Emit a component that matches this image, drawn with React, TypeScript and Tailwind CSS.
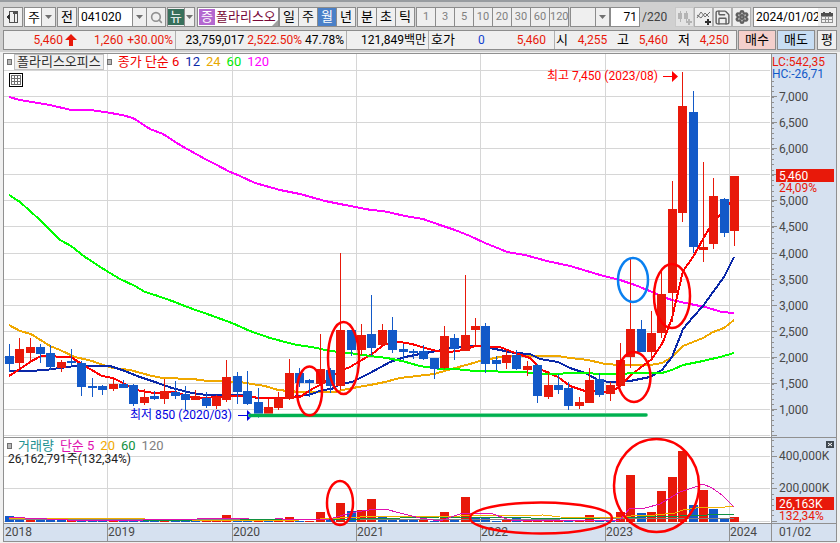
import React, { useState } from "react";
import { Search, Save, Settings } from "lucide-react";

// 1. 타입 정의
// [고가 y, 저가 y, 몸통 위, 몸통 아래, 양봉(1) / 음봉(0)]
type Candle = [number, number, number, number, number];
// [높이, 증가(1) / 감소(0)]
type Volume = [number, number];

const RED = "#e8190a";
const BLUE = "#1259c8";

// 2. 차트 데이터
const candles: Candle[] = [
  [344, 372, 356, 364, 0], [338, 368, 349, 363, 1], [338, 363, 347, 353, 1],
  [344, 363, 347, 354, 0], [345, 370, 353, 367, 0], [360, 372, 362, 368, 1],
  [349, 366, 361, 363, 0], [361, 396, 363, 387, 0], [378, 397, 386, 388, 0],
  [385, 395, 386, 390, 0], [379, 391, 384, 389, 1], [380, 388, 384, 388, 0],
  [384, 406, 385, 404, 0], [389, 405, 397, 403, 1], [391, 400, 396, 399, 0],
  [379, 404, 391, 399, 1], [381, 399, 392, 396, 0], [386, 410, 394, 400, 0],
  [390, 400, 396, 400, 1], [392, 408, 398, 406, 0], [395, 409, 397, 406, 1],
  [360, 402, 377, 400, 1], [372, 404, 376, 392, 0], [371, 405, 391, 404, 0],
  [388, 418, 402, 414, 0], [399, 415, 407, 414, 1], [392, 410, 398, 408, 1],
  [359, 400, 373, 399, 1], [368, 387, 373, 383, 0], [379, 397, 380, 383, 0],
  [334, 385, 369, 384, 1], [368, 393, 370, 386, 0], [253, 390, 330, 386, 1],
  [330, 356, 330, 350, 0], [324, 355, 335, 350, 1], [295, 356, 334, 348, 0],
  [324, 345, 330, 345, 1], [317, 353, 330, 350, 0], [344, 360, 349, 352, 0],
  [349, 359, 351, 353, 0], [345, 360, 351, 359, 0], [358, 379, 358, 369, 0],
  [326, 369, 336, 368, 1], [334, 360, 338, 349, 0], [275, 351, 335, 351, 1],
  [318, 346, 326, 330, 1], [323, 373, 326, 364, 0], [356, 370, 360, 364, 0],
  [350, 369, 355, 363, 1], [350, 370, 355, 369, 0], [361, 376, 366, 370, 1],
  [364, 403, 365, 396, 0], [371, 399, 385, 397, 1], [374, 394, 385, 390, 0],
  [382, 410, 388, 406, 0], [397, 409, 402, 406, 1], [368, 403, 380, 403, 1],
  [373, 397, 379, 395, 0], [382, 401, 385, 394, 1], [343, 387, 360, 386, 1],
  [259, 368, 329, 357, 1], [320, 352, 329, 352, 0], [311, 360, 333, 352, 1],
  [270, 338, 294, 333, 1], [181, 322, 209, 293, 1], [72, 222, 106, 213, 1],
  [91, 253, 112, 247, 0], [162, 262, 247, 250, 1], [178, 249, 196, 244, 1],
  [198, 237, 199, 233, 0], [176, 246, 176, 231, 1],
];

const volumes: Volume[] = [
  [6, 0], [2, 0], [2, 1], [2, 0], [2, 0], [2, 0], [2, 1], [1, 0], [1, 0], [1, 0],
  [1, 1], [1, 0], [1, 0], [1, 0], [1, 0], [1, 1], [1, 0], [1, 0], [1, 0], [1, 1],
  [2, 1], [7, 1], [1, 0], [1, 0], [2, 1], [1, 0], [1, 1], [5, 1], [1, 0], [1, 1],
  [10, 1], [2, 0], [19, 1], [11, 0], [12, 1], [23, 1], [5, 0], [4, 0], [3, 0], [3, 0],
  [2, 1], [1, 0], [10, 1], [2, 0], [25, 1], [5, 0], [4, 0], [1, 0], [2, 1], [4, 0],
  [1, 1], [1, 1], [1, 1], [1, 1], [2, 0], [2, 1], [7, 1], [2, 0], [2, 0], [10, 1],
  [47, 1], [9, 0], [10, 1], [31, 1], [45, 1], [71, 1], [17, 0], [32, 1], [13, 0],
  [4, 0], [5, 1],
];

const averages = [
  {
    color: "#ff00ff",
    points:
      "9,97 20,100 50,105 71,110 90,110 105,112 122,115 133,118 150,129 163,134 180,145 205,159 217,165 228,171 240,176 255,183 280,190 300,194 325,201 345,205 371,210 383,211 405,216 423,219 440,225 455,230 470,236 485,243 500,249 507,252 525,255 547,261 570,266 600,275 620,280 632,284 640,287 652,292 663,297 672,300 690,304 705,307 722,312 734,313",
  },
  {
    color: "#f0a800",
    points:
      "9,325 20,331 31,334 50,346 60,350 75,357 92,361 103,365 113,368 130,370 152,376 163,378 193,379 207,381 240,382 252,384 265,386 278,390 300,392 335,392 347,389 370,385 385,382 400,378 417,376 434,374 455,368 470,364 480,361 500,357 520,356 558,356 570,358 588,360 605,364 620,365 650,365 662,363 672,357 683,346 703,338 713,332 724,328 734,320",
  },
  {
    color: "#0a28a8",
    points:
      "9,371 30,371 45,370 60,368 75,366 110,366 125,371 137,376 155,382 172,388 192,393 207,395 240,395 258,398 280,398 300,396 312,394 322,390 332,389 340,384 352,382 370,373 390,362 405,357 420,354 437,351 450,348 470,346 480,346 500,350 515,353 530,354 540,359 558,362 570,368 585,373 600,381 612,382 630,381 650,377 662,370 672,357 683,329 693,317 703,306 713,292 724,277 734,257",
  },
  {
    color: "#ff0000",
    points:
      "9,376 20,369 30,362 41,356 52,356 60,357 71,357 80,363 90,369 102,376 113,378 125,384 140,391 155,393 175,392 190,397 205,398 230,396 250,396 258,398 280,398 300,397 312,389 322,384 340,371 350,367 360,361 372,354 385,344 400,342 412,344 425,348 437,351 450,352 463,350 475,346 500,347 515,353 530,358 542,370 558,377 570,386 585,391 605,392 618,388 630,376 640,368 652,359 663,342 672,318 683,271 693,257 703,239 713,222 724,211 730,203 734,203",
  },
  {
    color: "#00ff00",
    points:
      "9,195 20,202 40,220 60,240 71,246 85,257 105,270 120,279 135,286 145,292 155,295 172,301 190,308 210,315 232,323 250,331 270,338 285,342 297,345 312,347 330,351 350,353 370,356 387,358 402,361 420,366 440,369 455,369 475,371 520,372 547,374 580,373 605,374 650,373 662,373 672,370 683,365 703,361 720,357 734,353",
  },
];

const volumeAverages = [
  { color: "#808080", points: "9,519 180,520 350,519 560,519 734,518" },
  { color: "#109040", points: "107,520 240,520 360,519 440,517 502,517 560,519 680,516 734,514" },
  { color: "#f0b000", points: "9,518 97,518 240,521 300,520 360,517 460,516 543,515 560,517 620,518 636,515 655,515 675,513 683,510 703,507 725,507 734,506" },
  { color: "#e010b0", points: "9,517 25,518 90,521 250,518 275,518 290,520 330,519 350,513 375,509 385,509 400,513 420,518 440,521 460,514 490,513 510,520 570,521 620,520 630,508 645,508 660,504 680,492 695,487 703,484 712,488 722,495 734,507" },
];

const years = [
  { label: "2018", x: 4 },
  { label: "2019", x: 107 },
  { label: "2020", x: 232 },
  { label: "2021", x: 356 },
  { label: "2022", x: 480 },
  { label: "2023", x: 605 },
  { label: "2024", x: 729 },
];

const marks = [
  { cx: 309.5, cy: 391, rx: 12.5, ry: 24.5, color: "#ff0000" },
  { cx: 343.5, cy: 358, rx: 15.5, ry: 36, color: "#ff0000" },
  { cx: 633, cy: 280, rx: 15, ry: 22, color: "#0a80f0" },
  { cx: 672, cy: 296, rx: 18, ry: 32, color: "#ff0000" },
  { cx: 634, cy: 377, rx: 16.5, ry: 25, color: "#ff0000" },
  { cx: 340, cy: 503, rx: 13, ry: 22, color: "#ff0000" },
  { cx: 541, cy: 518, rx: 71, ry: 15.5, color: "#ff0000" },
  { cx: 656.5, cy: 485.5, rx: 42.5, ry: 46.5, color: "#ff0000" },
];

const prices = [7000, 6500, 6000, 5500, 5000, 4500, 4000, 3500, 3000, 2500, 2000, 1500, 1000];

// 가격을 차트의 y 좌표로 변환
const priceY = (price: number) => Math.round(409 - ((price - 1000) * 313) / 6000) + 0.5;
const candleX = (index: number) => Math.floor(9.5 + index * 10.357);

const boxClass = "h-5 border border-[#8c8c8c] flex items-center justify-center";

// 3. 공통 컴포넌트
function Triangle() {
  return (
    <svg width="7" height="4" viewBox="0 0 7 4" className="shrink-0">
      <path d="M0 0h7L3.5 4z" fill="#707070" />
    </svg>
  );
}

function DropBox({
  label,
  value,
  className,
}: {
  label: string;
  value: string;
  className: string;
}) {
  return (
    <div className={`relative ${boxClass} ${className}`}>
      <select
        aria-label={label}
        defaultValue={value}
        className="h-full w-full appearance-none bg-transparent pl-[3px] outline-none"
      >
        <option value={value}>{value}</option>
      </select>
      <span className="pointer-events-none absolute inset-y-0 right-0 flex w-[14px] items-center justify-center border-l border-[#8c8c8c] bg-[#efefef]">
        <Triangle />
      </span>
    </div>
  );
}

function TabGroup({
  items,
  active,
  onSelect,
  className = "",
}: {
  items: string[];
  active?: string;
  onSelect?: (name: string) => void;
  className?: string;
}) {
  return (
    <div className={`flex ${className}`}>
      {items.map((name) => (
        <button
          key={name}
          type="button"
          onClick={() => onSelect?.(name)}
          className={`-mr-px h-5 w-5 overflow-hidden border border-[#8c8c8c] text-center leading-[18px] ${
            active === name ? "bg-[#4a80c8] text-white" : "bg-[#efefef]"
          }`}
        >
          {name}
        </button>
      ))}
    </div>
  );
}

function Toolbar() {
  const [period, setPeriod] = useState("월");

  return (
    <div className="flex h-5 items-center text-[13px]">
      <button type="button" aria-label="창 접기" className={`${boxClass} mr-px w-5 bg-[#efefef]`}>
        <svg width="14" height="14" viewBox="0 0 14 14" fill="none" shapeRendering="crispEdges">
          <path d="M3.5 4V1.500h8v11h-8V10" stroke="#505050" />
          <path d="M7 2h4v2H7zM7.500 4h1v8h-1z" fill="#505050" />
          <path d="M0 7l4-4v8z" fill="#303030" />
        </svg>
      </button>
      <DropBox label="차트 종류" value="주" className="mr-px w-8 bg-white" />
      <button type="button" className={`${boxClass} mr-px w-5 bg-[#efefef]`}>전</button>
      <div className={`${boxClass} mr-px w-[88px] bg-white`}>
        <input
          aria-label="종목코드"
          defaultValue="041020"
          className="h-full w-[53px] shrink-0 bg-white pl-[2px] text-[12px] outline-none"
        />
        <button
          type="button"
          aria-label="최근 종목"
          className="flex h-full w-[14px] shrink-0 items-center justify-center border-l border-[#8c8c8c] bg-[#efefef]"
        >
          <Triangle />
        </button>
        <button
          type="button"
          aria-label="종목 검색"
          className="flex h-full flex-1 items-center justify-center border-l border-[#8c8c8c] bg-[#efefef]"
        >
          <Search size={13} strokeWidth={3} className="text-[#909090]" />
        </button>
      </div>
      <div className={`${boxClass} mr-[2px] w-7 bg-[#efefef]`}>
        <button type="button" className="h-4 w-4 shrink-0 bg-[#38705c] text-center leading-4 text-white">
          뉴
        </button>
        <button
          type="button"
          aria-label="뉴스 목록"
          className="flex h-full w-[10px] items-center justify-center border-l border-[#8c8c8c]"
        >
          <Triangle />
        </button>
      </div>
      <div className={`relative ${boxClass} w-[82px] justify-start bg-white pl-px`}>
        <span className="h-4 w-4 shrink-0 bg-[#b468d0] text-center leading-4 text-white">증</span>
        <span className="ml-px whitespace-nowrap text-[#780838]">폴라리스오</span>
        <span className="absolute right-0 bottom-0 border-[3px] border-transparent border-r-[#a0a0a0] border-b-[#a0a0a0]" />
      </div>

      <TabGroup items={["일", "주", "월", "년"]} active={period} onSelect={setPeriod} />
      <TabGroup
        items={["분", "초", "틱"]}
        active={period}
        onSelect={setPeriod}
        className="ml-[2px]"
      />
      <TabGroup
        items={["1", "3", "5", "10", "20", "30", "60", "120"]}
        className="ml-[2px] text-[11px] text-[#808080]"
      />
      <DropBox label="분 단위" value="" className="ml-[2px] w-10 bg-[#efefef]" />
      <label className="flex items-center text-[12px] text-[#404040]">
        <input
          aria-label="표시 봉 개수"
          defaultValue="71"
          className="h-5 w-[30px] border border-[#8c8c8c] bg-white pr-[2px] text-right text-black outline-none"
        />
        <span className="ml-[2px]">/220</span>
      </label>

      <div className="ml-auto flex">
        <button type="button" aria-label="봉 추가" className="flex h-5 w-[19px] items-center justify-center border border-[#c8c8c8] bg-[#e4e4e4]">
          <svg width="15" height="15" viewBox="0 0 15 15" shapeRendering="crispEdges">
            <path d="M1 3h4v6H1zM7 3h4v6H7zM3 1h1v11H3zM9 1h1v10H9zM9 11h6v2H9zM11 9h2v6h-2z" fill="#b4b4b4" />
          </svg>
        </button>
        <button type="button" aria-label="지표 추가" className="flex h-5 w-[19px] items-center justify-center border border-[#b0b0b0] bg-[#efefef]">
          <svg width="16" height="15" viewBox="0 0 16 15">
            <path d="M1 8l4-6 4 5 5-5M1 5l4 3 4-5 4 4" fill="none" stroke="#707070" />
            <path d="M9 11h6v2H9zM11 9h2v6h-2z" fill="#303030" />
          </svg>
        </button>
        <button type="button" aria-label="저장" className="flex h-5 w-[19px] items-center justify-center border border-[#b0b0b0] bg-[#efefef]">
          <Save size={17} strokeWidth={2} className="shrink-0 text-[#606060]" />
        </button>
        <button type="button" aria-label="설정" className="flex h-5 w-[19px] items-center justify-center border border-[#b0b0b0] bg-[#efefef]">
          <Settings size={14} strokeWidth={4} className="text-[#606060]" />
        </button>
      </div>
      <div className={`${boxClass} ml-[2px] w-[84px] bg-white`}>
        <input
          aria-label="조회 일자"
          defaultValue="2024/01/02"
          className="h-full min-w-0 flex-1 bg-white pl-[2px] text-[12px] outline-none"
        />
        <button type="button" aria-label="달력" className="flex h-full w-[18px] shrink-0 items-center justify-center bg-[#efefef]">
          <svg width="12" height="11" viewBox="0 0 12 11" shapeRendering="crispEdges">
            <path d="M0 1h12v3H0zM2 0h2v1H2zM8 0h2v1H8z" fill="#505050" />
            <path d="M0.500 4.500h11v6H0.500zM4.500 5v5M7.500 5v5M1 7.500h10" fill="none" stroke="#909090" />
          </svg>
        </button>
      </div>
    </div>
  );
}

function QuoteBar() {
  return (
    <div className="flex h-5 text-[13px] leading-[18px] whitespace-nowrap">
      <div className="flex flex-1 border border-[#8c8c8c] bg-[#efefef] text-[12px] text-[#e8190a]">
        <div className="flex w-[172px] items-center justify-end border-r border-[#b0b0b0] pr-[2px]">
          <span>5,460</span>
          <svg width="12" height="12" viewBox="0 0 12 12" className="ml-[2px] shrink-0">
            <path d="M6 0l6 6H8v6H4V6H0z" fill={RED} />
          </svg>
          <span className="ml-[17px]">1,260</span>
          <span className="ml-1">+30.00%</span>
        </div>
        <div className="flex w-[171px] justify-end gap-[3px] border-r border-[#b0b0b0] pr-[2px]">
          <span className="text-black">23,759,017</span>
          <span>2,522.50%</span>
          <span className="text-black">47.78%</span>
        </div>
        <div className="w-[82px] border-r border-[#b0b0b0] pr-[2px] text-right text-black">
          121,849백만
        </div>
        <div className="flex w-[126px] border-r border-[#b0b0b0] pr-[8px] pl-[2px]">
          <span className="text-[13px] text-black">호가</span>
          <span className="ml-auto text-[#1040d0]">0</span>
          <span className="ml-[32px]">5,460</span>
        </div>
        <div className="flex flex-1 justify-between pr-[7px] pl-px">
          <span className="text-[13px] text-black">시</span>
          <span>4,255</span>
          <span className="text-[13px] text-black">고</span>
          <span>5,460</span>
          <span className="text-[13px] text-black">저</span>
          <span>4,250</span>
        </div>
      </div>
      <button type="button" className="ml-px w-[38px] border border-[#8c8c8c] bg-[#f4d0cc]">매수</button>
      <button type="button" className="ml-px w-[38px] border border-[#8c8c8c] bg-[#c8def4]">매도</button>
      <button type="button" className="ml-[2px] w-5 border border-[#8c8c8c] bg-[#efefef]">평</button>
    </div>
  );
}

function Plot() {
  return (
    <svg viewBox="4 54 767 487" className="block h-auto w-full text-[12px]">
      <rect x="4" y="54" width="767" height="487" fill="#ffffff" />

      {/* 격자선 */}
      <g stroke="#d6d6d6" shapeRendering="crispEdges">
        {[7500, ...prices, 500].map((price) => (
          <line key={price} x1="4" x2="770" y1={priceY(price)} y2={priceY(price)} />
        ))}
        {[456.5, 488.5, 521.5].map((y) => (
          <line key={y} x1="4" x2="770" y1={y} y2={y} />
        ))}
        {years.slice(1).map(({ x }) => (
          <line key={x} x1={x + 0.5} x2={x + 0.5} y1="54" y2="523" />
        ))}
      </g>

      {/* 이동평균선 */}
      {averages.map(({ color, points }) => (
        <polyline
          key={color}
          points={points}
          fill="none"
          stroke={color}
          strokeWidth="2"
          shapeRendering="crispEdges"
        />
      ))}

      {/* 캔들과 거래량 */}
      <g shapeRendering="crispEdges">
        {candles.map(([high, low, top, bottom, up], i) => (
          <g key={i} fill={up ? RED : BLUE}>
            <rect x={candleX(i)} y={high} width="1" height={low - high} />
            <rect x={candleX(i) - 4} y={top} width="9" height={bottom - top} />
          </g>
        ))}
        {volumes.map(([height, up], i) => (
          <rect
            key={i}
            x={candleX(i) - 4}
            y={522 - height}
            width="9"
            height={height}
            fill={up ? RED : BLUE}
          />
        ))}
        {volumeAverages.map(({ color, points }) => (
          <polyline key={color} points={points} fill="none" stroke={color} />
        ))}
      </g>

      {/* 최고 / 최저 표시 */}
      <text x="658" y="80" textAnchor="end" fill="#ff0000">최고 7,450 (2023/08)</text>
      <path d="M663 76h9v-5l6 5.5-6 5.5v-5h-9z" fill="#ff0000" />
      <text x="232" y="419" textAnchor="end" fill="#0000e0">최저 850 (2020/03)</text>
      <path d="M238 415h9v-5l6 5.5-6 5.5v-5h-9z" fill="#0000e0" />

      {/* 날짜 축 */}
      <rect x="4" y="523" width="767" height="18" fill="#d6e1f0" />
      <g stroke="#909090" shapeRendering="crispEdges">
        <line x1="4" x2="771" y1="437.5" y2="437.5" />
        <line x1="4" x2="771" y1="523.5" y2="523.5" />
        {years.slice(1).map(({ x }) => (
          <line key={x} x1={x + 0.5} x2={x + 0.5} y1="523" y2="541" />
        ))}
      </g>
      {years.map(({ label, x }) => (
        <text key={label} x={x + 1} y="536" fill="#484848">{label}</text>
      ))}

      {/* 지지선과 동그라미 표시 */}
      <path d="M250 415.5L646 415" stroke="#90e0b0" strokeWidth="4" strokeLinecap="round" />
      <path d="M250 415.5L646 415" stroke="#00b050" strokeWidth="3" strokeLinecap="round" />
      {marks.map(({ color, ...shape }) => (
        <ellipse
          key={`${shape.cx}-${shape.cy}`}
          {...shape}
          fill="none"
          stroke={color}
          strokeWidth="2.5"
        />
      ))}
    </svg>
  );
}

function PriceAxis() {
  return (
    <svg viewBox="771 54 65 487" className="block h-full w-[65px] shrink-0 bg-[#d6e1f0] text-[12px]">
      <g stroke="#909090" shapeRendering="crispEdges">
        <line x1="771.5" x2="771.5" y1="54" y2="541" />
        {Array.from({ length: 68 }, (_, i) => Math.round(81 + i * 5.217) + 0.5).map((y) => (
          <line key={y} x1="772" x2="774" y1={y} y2={y} />
        ))}
        {[...prices.map(priceY), 435.5, 456.5, 488.5, 521.5].map((y) => (
          <line key={y} x1="772" x2="777" y1={y} y2={y} />
        ))}
        {[440, 446, 451, 462, 467, 473, 478, 483, 494, 499, 505, 510, 515].map((y) => (
          <line key={y} x1="772" x2="774" y1={y + 0.5} y2={y + 0.5} />
        ))}
        <line x1="771" x2="836" y1="437.5" y2="437.5" />
        <line x1="771" x2="836" y1="523.5" y2="523.5" />
      </g>
      <g fill="#484848">
        {prices
          .filter((price) => price !== 5500)
          .map((price) => (
            <text key={price} x="779" y={priceY(price) + 4}>{price.toLocaleString("en-US")}</text>
          ))}
        <text x="779" y="460">400,000K</text>
        <text x="779" y="492">200,000K</text>
        <text x="779" y="536">01/02</text>
      </g>
      <rect x="776" y="169" width="58" height="13" fill={RED} />
      <rect x="776" y="497" width="58" height="13" fill={RED} />
      <g fill="#ffffff">
        <text x="779" y="180">5,460</text>
        <text x="779" y="508">26,163K</text>
      </g>
      <g fill={RED}>
        <text x="779" y="192">24,09%</text>
        <text x="779" y="520">132,34%</text>
        <text x="772" y="66">LC:542,35</text>
      </g>
      <text x="772" y="78" fill={BLUE}>HC:-26,71</text>
      <rect x="826" y="441" width="8" height="7" fill="#404850" />
      <path d="M828 443l4 3M832 443l-4 3" stroke="#ffffff" />
    </svg>
  );
}

function LegendMark() {
  return <span className="h-[6px] w-[5px] shrink-0 border border-[#707070] bg-[#b8b8b8]" />;
}

export default function App() {
  return (
    <div className="min-h-screen bg-[#f0f0f0] font-[Roboto,'Noto_Sans_CJK_KR',sans-serif] text-[13px] text-black">
      <header className="flex flex-col gap-[3px] border-t-2 border-[#989ca0] bg-[#d0d0d0] px-[3px] pt-[5px] pb-[2px]">
        <Toolbar />
        <QuoteBar />
      </header>

      <main className="mx-[3px] mt-px flex items-stretch border border-[#909090]">
        <div className="relative min-w-0 flex-1">
          <Plot />

          {/* 가격 차트 범례 */}
          <div className="absolute top-0 left-[3px] flex h-4 items-center leading-4 whitespace-nowrap">
            <LegendMark />
            <span className="ml-[2px] border border-[#c0c0c0] bg-[#f0f0f0] px-[2px] leading-[14px] text-[#303030]">
              폴라리스오피스
            </span>
            <span className="ml-[3px] flex items-center gap-[6px]">
              <LegendMark />
              <span className="text-[#f00000]">종가 단순 6</span>
              <span className="text-[#0a28a8]">12</span>
              <span className="text-[#e8a800]">24</span>
              <span className="text-[#00e800]">60</span>
              <span className="text-[#ff00ff]">120</span>
            </span>
          </div>
          <button
            type="button"
            aria-label="데이터 표"
            className="absolute top-[19px] left-[5px] h-[14px] w-[14px] border border-black bg-white"
          >
            <svg width="12" height="12" viewBox="0 0 12 12" fill="none" stroke="#707070" shapeRendering="crispEdges">
              <path d="M1.5 1.5h9v9h-9zM4.500 1v10M7.500 1v10M1 4.500h10M1 7.500h10" />
            </svg>
          </button>

          {/* 거래량 차트 범례 */}
          <div className="absolute top-[384px] left-[3px]">
            <div className="flex h-4 items-center gap-[6px] leading-4 whitespace-nowrap">
              <LegendMark />
              <span className="text-[#209090]">거래량</span>
              <span className="text-[#e010b0]">단순 5</span>
              <span className="text-[#f0a800]">20</span>
              <span className="text-[#109040]">60</span>
              <span className="text-[#808080]">120</span>
            </div>
            <div className="pl-px text-[12px] leading-[10px] text-[#202020]">26,162,791주(132,34%)</div>
          </div>
        </div>
        <PriceAxis />
      </main>
    </div>
  );
}
